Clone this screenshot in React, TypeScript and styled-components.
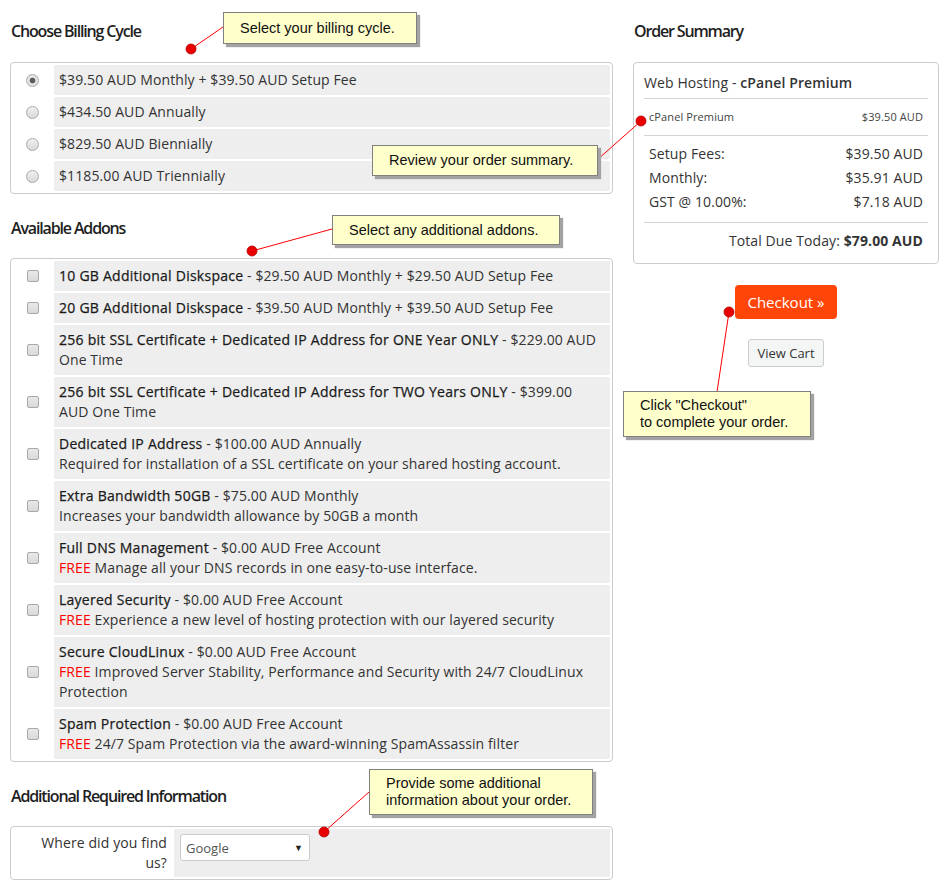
import React from "react";
import styled, { createGlobalStyle } from "styled-components";

// 전역 스타일
const GlobalStyle = createGlobalStyle`
  body {
    margin: 0;
    background: #fff;
    font-family: "Open Sans", "Liberation Sans", sans-serif;
    font-size: 14px;
    letter-spacing: 0.1px;
    color: #333;
  }
`;

const Page = styled.div`
  position: relative;
  width: 946px;
  height: 887px;
  overflow: hidden;
  box-sizing: border-box;
  padding-left: 10px;
  display: flex;
  gap: 20px;
`;

const MainColumn = styled.div`
  width: 603px;
`;

const SideColumn = styled.div`
  width: 306px;
`;

const SectionTitle = styled.h2`
  margin: 24px 0 20px 1px;
  font-size: 16px;
  font-weight: 600;
  line-height: 20px;
  letter-spacing: -1.15px;
  color: #1e1e1e;

  &:first-child {
    margin-top: 21px;
    margin-bottom: 21px;
  }
`;

// 옵션 테이블 (cellspacing 2 느낌)
const OptionBox = styled.div`
  display: flex;
  flex-direction: column;
  gap: 2px;
  padding: 2px;
  border: 1px solid #ccc;
  border-radius: 4px;
`;

const OptionRow = styled.div<{ $labelWidth?: number }>`
  display: grid;
  grid-template-columns: ${(p) => p.$labelWidth ?? 39}px 1fr;
  gap: 2px;
`;

const ControlCell = styled.div`
  display: flex;
  align-items: center;
  justify-content: center;
  background: #fff;
`;

const TextCell = styled.div`
  background: #eee;
  padding: 5px;
  line-height: 20px;
`;

const Radio = styled.input.attrs({ type: "radio" })`
  appearance: none;
  margin: 0;
  width: 13px;
  height: 13px;
  border-radius: 50%;
  border: 1px solid #aaa;
  background: linear-gradient(#f0f0f0, #d8d8d8);

  &:checked {
    background: radial-gradient(circle, #5c5c5c 0 2.5px, #e2e2e2 3.2px);
  }
`;

const Checkbox = styled.input.attrs({ type: "checkbox" })`
  appearance: none;
  margin: 0;
  width: 12px;
  height: 12px;
  border-radius: 2px;
  border: 1px solid #a8a8a8;
  background: linear-gradient(#e9e9e9, #d9d9d9);
`;

const AddonName = styled.span`
  color: #1a1a1a;
  letter-spacing: 0.25px;
  -webkit-text-stroke: 0.25px #1a1a1a;
`;

const Free = styled.span`
  color: #f00;
`;

const LabelCell = styled.div`
  background: #fff;
  text-align: right;
  padding: 4px 5px 4px 22px;
  line-height: 20px;
`;

const FieldCell = styled.div`
  background: #eee;
  padding: 5px 6px;
`;

const SelectWrap = styled.div`
  position: relative;
  width: 130px;
`;

const Select = styled.select`
  appearance: none;
  width: 130px;
  height: 27px;
  padding: 0 5px;
  border: 1px solid #ccc;
  border-radius: 3px;
  background: #fff;
  font-family: "Open Sans", "Liberation Sans", sans-serif;
  font-size: 13px;
  color: #555;
`;

const SelectArrow = styled.span`
  position: absolute;
  right: 7px;
  top: 7px;
  font-size: 9px;
  color: #222;
  pointer-events: none;
`;

// 주문 요약
const SummaryBox = styled.div`
  border: 1px solid #ccc;
  border-radius: 4px;
  padding: 10px 10px 12px;
`;

const SummaryTitle = styled.div`
  line-height: 20px;
  font-size: 14px;

  b {
    font-weight: 600;
  }
`;

const Divider = styled.div<{ $flush?: boolean }>`
  height: 1px;
  background: #d4d4d4;
  margin-top: ${(p) => (p.$flush ? 0 : 5)}px;
`;

const ProductLine = styled.div`
  display: flex;
  justify-content: space-between;
  padding: 8px 5px;
  line-height: 20px;
  font-size: 11px;
  color: #444;
`;

const FeeBlock = styled.div`
  padding: 6px 5px 8px;
`;

const FeeLine = styled.div`
  display: flex;
  justify-content: space-between;
  line-height: 24px;
`;

const TotalLine = styled.div`
  padding: 8px 5px 0;
  line-height: 20px;
  text-align: right;

  b {
    font-weight: 700;
  }
`;

const Actions = styled.div`
  display: flex;
  flex-direction: column;
  align-items: center;
  gap: 20px;
  margin-top: 21px;
`;

const CheckoutButton = styled.button`
  height: 34px;
  padding: 0 12px;
  border: none;
  border-radius: 4px;
  background: #ff4507;
  color: #fff;
  font-family: "Open Sans", "Liberation Sans", sans-serif;
  font-size: 15px;
`;

const CartButton = styled.button`
  height: 28px;
  padding: 0 8px;
  border: 1px solid #ccc;
  border-radius: 3px;
  background: #f4f6f6;
  color: #333;
  font-family: "Open Sans", "Liberation Sans", sans-serif;
  font-size: 13px;
`;

// 안내 말풍선 (스크린샷 주석)
const Callout = styled.div<{ $x: number; $y: number; $w: number; $h: number }>`
  position: absolute;
  left: ${(p) => p.$x}px;
  top: ${(p) => p.$y}px;
  width: ${(p) => p.$w}px;
  height: ${(p) => p.$h}px;
  box-sizing: border-box;
  display: flex;
  align-items: center;
  padding: 0 16px;
  background: #ffffcc;
  border: 1px solid #808080;
  box-shadow: 3px 3px 1px #a3a3a3;
  font-family: "Liberation Sans", Arial, sans-serif;
  font-size: 14.5px;
  letter-spacing: 0;
  line-height: 17px;
  color: #111;
`;

const Pointers = styled.svg`
  position: absolute;
  left: 0;
  top: 0;
  pointer-events: none;
`;

interface Addon {
  name: string;
  price: string;
  desc?: string;
  free?: boolean;
}

const cycles = [
  "$39.50 AUD Monthly + $39.50 AUD Setup Fee",
  "$434.50 AUD Annually",
  "$829.50 AUD Biennially",
  "$1185.00 AUD Triennially",
];

const addons: Addon[] = [
  { name: "10 GB Additional Diskspace", price: "$29.50 AUD Monthly + $29.50 AUD Setup Fee" },
  { name: "20 GB Additional Diskspace", price: "$39.50 AUD Monthly + $39.50 AUD Setup Fee" },
  { name: "256 bit SSL Certificate + Dedicated IP Address for ONE Year ONLY", price: "$229.00 AUD One Time" },
  { name: "256 bit SSL Certificate + Dedicated IP Address for TWO Years ONLY", price: "$399.00 AUD One Time" },
  {
    name: "Dedicated IP Address",
    price: "$100.00 AUD Annually",
    desc: "Required for installation of a SSL certificate on your shared hosting account.",
  },
  {
    name: "Extra Bandwidth 50GB",
    price: "$75.00 AUD Monthly",
    desc: "Increases your bandwidth allowance by 50GB a month",
  },
  {
    name: "Full DNS Management",
    price: "$0.00 AUD Free Account",
    desc: "Manage all your DNS records in one easy-to-use interface.",
    free: true,
  },
  {
    name: "Layered Security",
    price: "$0.00 AUD Free Account",
    desc: "Experience a new level of hosting protection with our layered security",
    free: true,
  },
  {
    name: "Secure CloudLinux",
    price: "$0.00 AUD Free Account",
    desc: "Improved Server Stability, Performance and Security with 24/7 CloudLinux Protection",
    free: true,
  },
  {
    name: "Spam Protection",
    price: "$0.00 AUD Free Account",
    desc: "24/7 Spam Protection via the award-winning SpamAssassin filter",
    free: true,
  },
];

// 말풍선 연결선: [점 x, 점 y, 끝 x, 끝 y]
const pointers = [
  [191, 49, 223, 27],
  [641, 121, 597, 160],
  [252, 251, 332, 229],
  [729, 312, 717, 392],
  [324, 832, 369, 792],
];

const App: React.FC = () => {
  return (
    <>
      <GlobalStyle />
      <Page>
        <MainColumn>
          <SectionTitle>Choose Billing Cycle</SectionTitle>
          <OptionBox>
            {cycles.map((c, i) => (
              <OptionRow key={c}>
                <ControlCell>
                  <Radio name="cycle" defaultChecked={i === 0} />
                </ControlCell>
                <TextCell>{c}</TextCell>
              </OptionRow>
            ))}
          </OptionBox>

          <SectionTitle>Available Addons</SectionTitle>
          <OptionBox>
            {addons.map((a) => (
              <OptionRow key={a.name}>
                <ControlCell>
                  <Checkbox />
                </ControlCell>
                <TextCell>
                  <AddonName>{a.name}</AddonName> - {a.price}
                  {a.desc && (
                    <>
                      <br />
                      {a.free && <Free>FREE </Free>}
                      {a.desc}
                    </>
                  )}
                </TextCell>
              </OptionRow>
            ))}
          </OptionBox>

          <SectionTitle>Additional Required Information</SectionTitle>
          <OptionBox>
            <OptionRow $labelWidth={159}>
              <LabelCell>Where did you find us?</LabelCell>
              <FieldCell>
                <SelectWrap>
                  <Select defaultValue="Google">
                    <option>Google</option>
                    <option>Bing</option>
                    <option>Friend</option>
                  </Select>
                  <SelectArrow>▼</SelectArrow>
                </SelectWrap>
              </FieldCell>
            </OptionRow>
          </OptionBox>
        </MainColumn>

        <SideColumn>
          <SectionTitle>Order Summary</SectionTitle>
          <SummaryBox>
            <SummaryTitle>
              Web Hosting - <b>cPanel Premium</b>
            </SummaryTitle>
            <Divider />
            <ProductLine>
              <span>cPanel Premium</span>
              <span>$39.50 AUD</span>
            </ProductLine>
            <Divider $flush />
            <FeeBlock>
              <FeeLine>
                <span>Setup Fees:</span>
                <span>$39.50 AUD</span>
              </FeeLine>
              <FeeLine>
                <span>Monthly:</span>
                <span>$35.91 AUD</span>
              </FeeLine>
              <FeeLine>
                <span>GST @ 10.00%:</span>
                <span>$7.18 AUD</span>
              </FeeLine>
            </FeeBlock>
            <Divider $flush />
            <TotalLine>
              Total Due Today: <b>$79.00 AUD</b>
            </TotalLine>
          </SummaryBox>
          <Actions>
            <CheckoutButton>Checkout »</CheckoutButton>
            <CartButton>View Cart</CartButton>
          </Actions>
        </SideColumn>

        <Pointers width={946} height={887}>
          {pointers.map(([x1, y1, x2, y2], i) => (
            <g key={i}>
              <line x1={x1} y1={y1} x2={x2} y2={y2} stroke="#f00" strokeWidth={1} />
              <circle cx={x1} cy={y1} r={5} fill="#e80000" stroke="#b00000" strokeWidth={0.8} />
            </g>
          ))}
        </Pointers>

        <Callout $x={223} $y={12} $w={194} $h={32}>
          Select your billing cycle.
        </Callout>
        <Callout $x={372} $y={145} $w={226} $h={31}>
          Review your order summary.
        </Callout>
        <Callout $x={332} $y={215} $w={228} $h={30}>
          Select any additional addons.
        </Callout>
        <Callout $x={623} $y={391} $w={188} $h={46}>
          Click "Checkout"
          <br />
          to complete your order.
        </Callout>
        <Callout $x={369} $y={769} $w={224} $h={46}>
          Provide some additional
          <br />
          information about your order.
        </Callout>
      </Page>
    </>
  );
};

export default App;
